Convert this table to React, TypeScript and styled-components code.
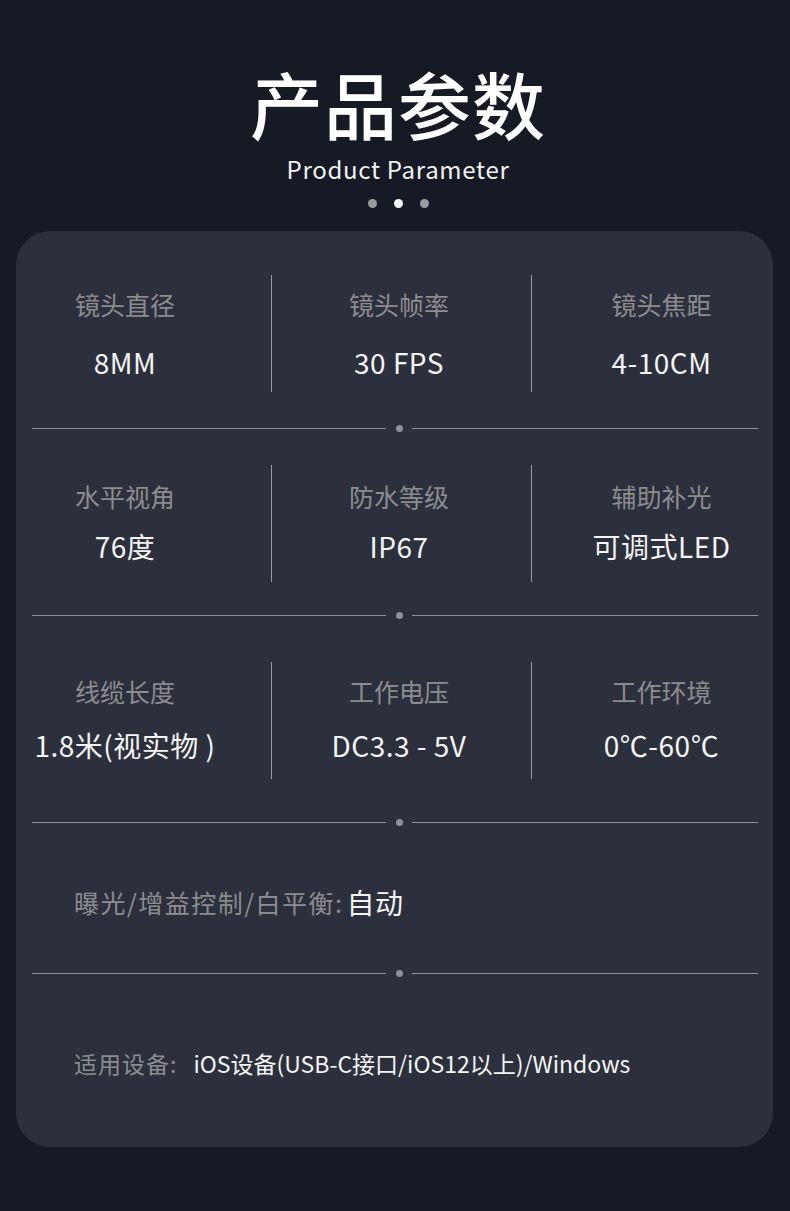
import React from "react";
import styled, { createGlobalStyle } from "styled-components";

const Global = createGlobalStyle`
  html, body { margin: 0; padding: 0; background: #161a24; }
  body { font-family: "Noto Sans CJK SC", "Noto Sans", sans-serif; }
`;

const Page = styled.div`
  width: 790px;
  min-height: 1211px;
  background: #161a24;
  display: flex;
  flex-direction: column;
  padding-top: 62px;
  box-sizing: border-box;
`;

const Header = styled.header`
  display: flex;
  flex-direction: column;
  align-items: center;
  padding-left: 6px;
`;

const Title = styled.h1`
  margin: 0;
  font-size: 73px;
  line-height: 80px;
  font-weight: 500;
  color: #ffffff;
  letter-spacing: 1px;
`;

const Subtitle = styled.div`
  margin-top: 12px;
  font-size: 24px;
  line-height: 30px;
  color: #f2f2f2;
  letter-spacing: 0.7px;
`;

const Dots = styled.div`
  margin-top: 15px;
  display: flex;
  gap: 17px;
  height: 9px;
`;

const Dot = styled.span<{ $active?: boolean }>`
  width: 9px;
  height: 9px;
  border-radius: 50%;
  background: ${(p) => (p.$active ? "#f5f5f5" : "#9b9ca0")};
`;

const Card = styled.div`
  margin: 23px 0 0 16px;
  width: 757px;
  background: #2c303c;
  border-radius: 34px;
  padding: 44px 0 64px;
  box-sizing: border-box;
  display: flex;
  flex-direction: column;
`;

const Row = styled.div`
  display: flex;
  height: 117px;
`;

const Cell = styled.div<{ $w?: number; $pl?: number; $pr?: number; $pt: number; $gap: number }>`
  ${(p) => (p.$w ? `width: ${p.$w}px;` : "flex: 1;")}
  padding-left: ${(p) => p.$pl ?? 0}px;
  padding-right: ${(p) => p.$pr ?? 0}px;
  padding-top: ${(p) => p.$pt}px;
  box-sizing: border-box;
  display: flex;
  flex-direction: column;
  align-items: center;
  gap: ${(p) => p.$gap}px;
  white-space: nowrap;
`;

const Spacer = styled.div<{ $w: number }>`
  width: ${(p) => p.$w}px;
`;

const VLine = styled.div`
  width: 1px;
  background: #9a9ca4;
`;

const Label = styled.div`
  font-size: 25px;
  line-height: 34px;
  color: #8c8c8e;
`;

const Value = styled.div`
  font-size: 28px;
  line-height: 34px;
  color: #f4f4f4;
  letter-spacing: 0.5px;
`;

const Sep = styled.div<{ $mt: number; $mb: number }>`
  display: flex;
  align-items: center;
  height: 7px;
  margin: ${(p) => p.$mt}px 15px ${(p) => p.$mb}px 16px;
`;

const SepLine = styled.div<{ $w?: number }>`
  ${(p) => (p.$w ? `width: ${p.$w}px;` : "flex: 1;")}
  height: 1px;
  background: #8e909a;
`;

const SepDot = styled.div`
  width: 7px;
  height: 7px;
  border-radius: 50%;
  background: #8e909a;
  margin: 0 9px 0 10px;
`;

const Line = styled.div`
  padding-left: 58px;
  height: 40px;
  display: flex;
  align-items: center;
  white-space: nowrap;
`;

const InlineLabel = styled.span<{ $size: number; $ls: number; $mr: number }>`
  color: #8c8c8e;
  font-size: ${(p) => p.$size}px;
  letter-spacing: ${(p) => p.$ls}px;
  margin-right: ${(p) => p.$mr}px;
`;

const InlineValue = styled.span<{ $size: number; $ls: number }>`
  color: #f4f4f4;
  font-size: ${(p) => p.$size}px;
  letter-spacing: ${(p) => p.$ls}px;
`;

type Item = { label: string; value: string };

const rows: { items: Item[]; pt: number; gap: number }[] = [
  {
    items: [
      { label: "镜头直径", value: "8MM" },
      { label: "镜头帧率", value: "30 FPS" },
      { label: "镜头焦距", value: "4-10CM" },
    ],
    pt: 12,
    gap: 24,
  },
  {
    items: [
      { label: "水平视角", value: "76度" },
      { label: "防水等级", value: "IP67" },
      { label: "辅助补光", value: "可调式LED" },
    ],
    pt: 14,
    gap: 16,
  },
  {
    items: [
      { label: "线缆长度", value: "1.8米(视实物 )" },
      { label: "工作电压", value: "DC3.3 - 5V" },
      { label: "工作环境", value: "0℃-60℃" },
    ],
    pt: 12,
    gap: 20,
  },
];

function SpecRow({ items, pt, gap }: { items: Item[]; pt: number; gap: number }) {
  return (
    <Row>
      <Cell $w={218} $pt={pt} $gap={gap}>
        <Label>{items[0].label}</Label>
        <Value>{items[0].value}</Value>
      </Cell>
      <Spacer $w={37} />
      <VLine />
      <Cell $w={259} $pr={5} $pt={pt} $gap={gap}>
        <Label>{items[1].label}</Label>
        <Value>{items[1].value}</Value>
      </Cell>
      <VLine />
      <Cell $pl={18} $pt={pt} $gap={gap}>
        <Label>{items[2].label}</Label>
        <Value>{items[2].value}</Value>
      </Cell>
    </Row>
  );
}

function Separator({ mt, mb }: { mt: number; mb: number }) {
  return (
    <Sep $mt={mt} $mb={mb}>
      <SepLine $w={354} />
      <SepDot />
      <SepLine />
    </Sep>
  );
}

export default function App() {
  return (
    <>
      <Global />
      <Page>
        <Header>
          <Title>产品参数</Title>
          <Subtitle>Product Parameter</Subtitle>
          <Dots>
            <Dot />
            <Dot $active />
            <Dot />
          </Dots>
        </Header>
        <Card>
          <SpecRow {...rows[0]} />
          <Separator mt={33} mb={33} />
          <SpecRow {...rows[1]} />
          <Separator mt={30} mb={43} />
          <SpecRow {...rows[2]} />
          <Separator mt={40} mb={56} />
          <Line>
            <InlineLabel $size={25} $ls={1.5} $mr={3}>曝光/增益控制/白平衡:</InlineLabel>
            <InlineValue $size={28} $ls={0.5}>自动</InlineValue>
          </Line>
          <Separator mt={48} mb={66} />
          <Line>
            <InlineLabel $size={23} $ls={1} $mr={16}>适用设备:</InlineLabel>
            <InlineValue $size={23} $ls={0}>iOS设备(USB-C接口/iOS12以上)/Windows</InlineValue>
          </Line>
        </Card>
      </Page>
    </>
  );
}
